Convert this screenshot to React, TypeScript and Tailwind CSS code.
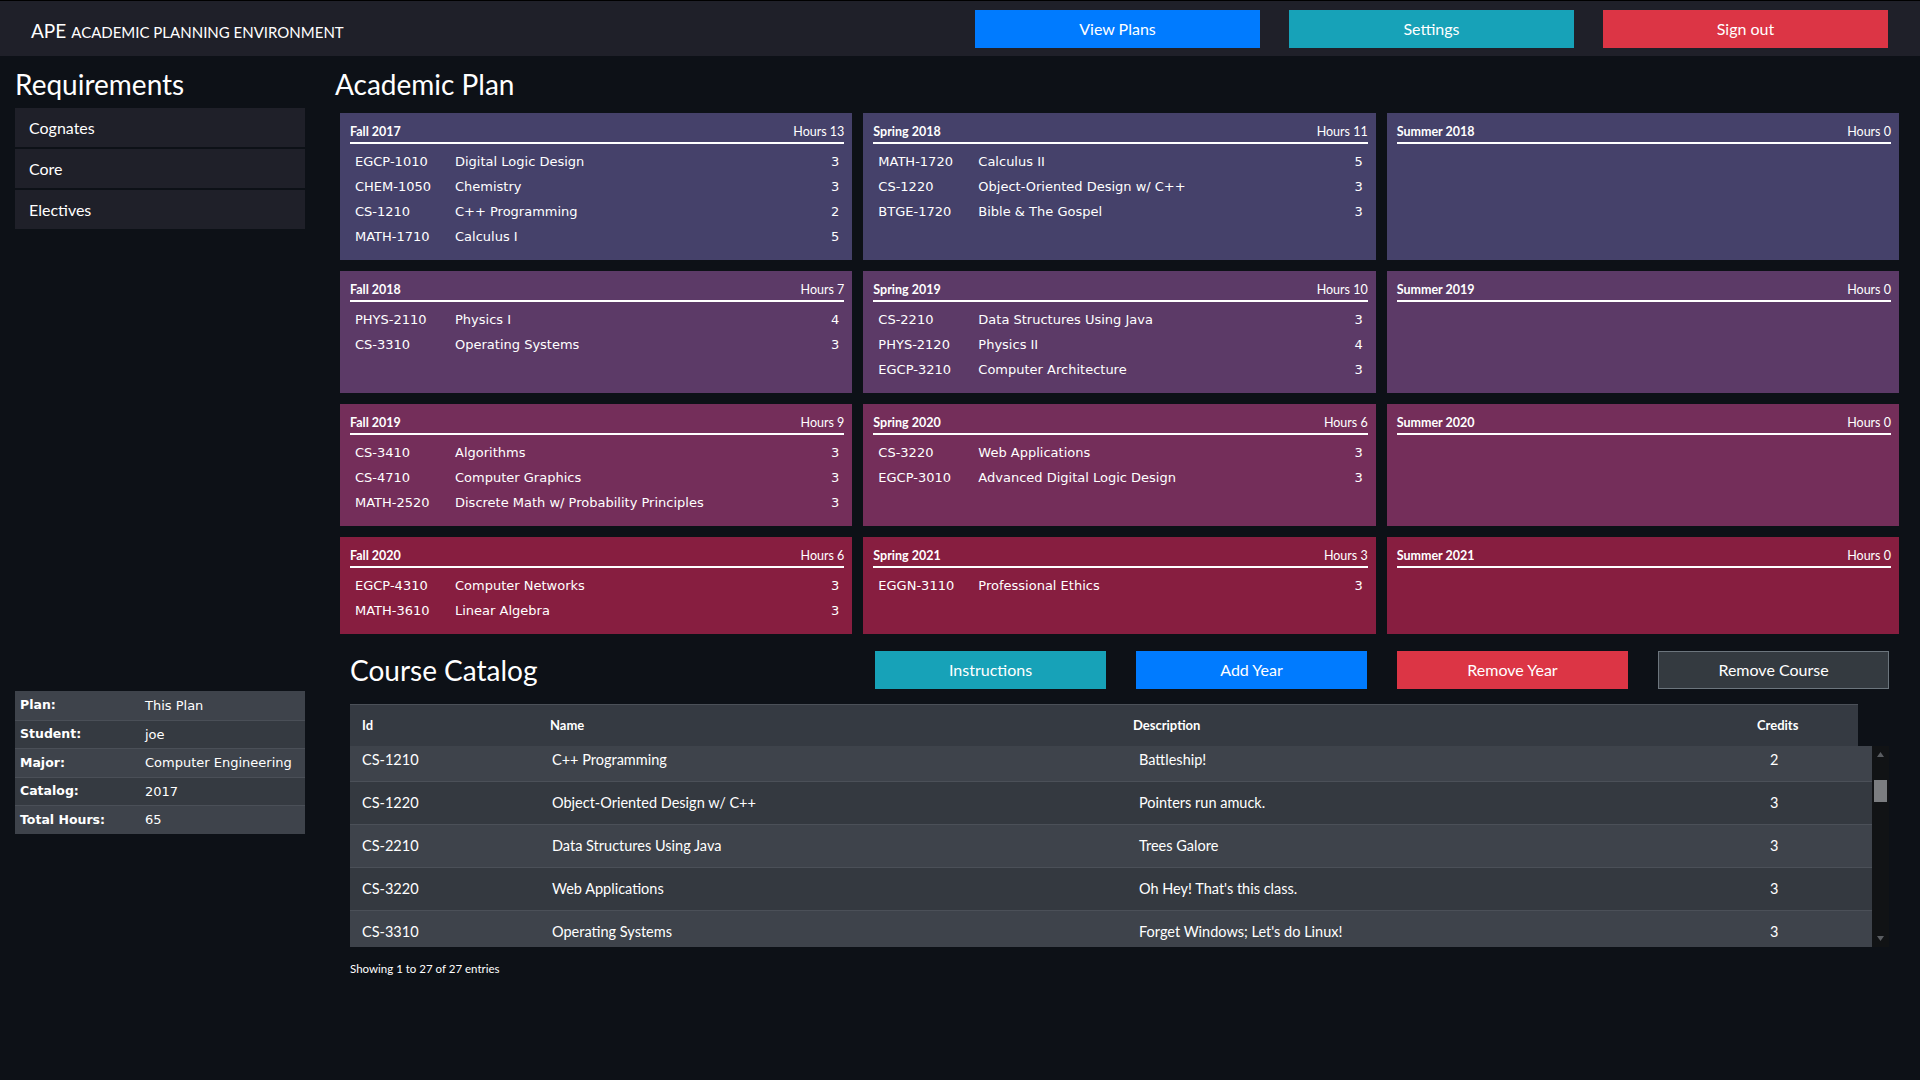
import React from "react";

const SEG = "font-['Lato','Open_Sans',sans-serif]";
const VER = "font-['DejaVu_Sans','Verdana',sans-serif]";

type Course = [string, string, number];
type Sem = { name: string; hours: number; courses: Course[] };

const rows: { bg: string; sems: Sem[] }[] = [
  {
    bg: "bg-[#45416a]",
    sems: [
      {
        name: "Fall 2017",
        hours: 13,
        courses: [
          ["EGCP-1010", "Digital Logic Design", 3],
          ["CHEM-1050", "Chemistry", 3],
          ["CS-1210", "C++ Programming", 2],
          ["MATH-1710", "Calculus I", 5],
        ],
      },
      {
        name: "Spring 2018",
        hours: 11,
        courses: [
          ["MATH-1720", "Calculus II", 5],
          ["CS-1220", "Object-Oriented Design w/ C++", 3],
          ["BTGE-1720", "Bible & The Gospel", 3],
        ],
      },
      { name: "Summer 2018", hours: 0, courses: [] },
    ],
  },
  {
    bg: "bg-[#5c3a67]",
    sems: [
      {
        name: "Fall 2018",
        hours: 7,
        courses: [
          ["PHYS-2110", "Physics I", 4],
          ["CS-3310", "Operating Systems", 3],
        ],
      },
      {
        name: "Spring 2019",
        hours: 10,
        courses: [
          ["CS-2210", "Data Structures Using Java", 3],
          ["PHYS-2120", "Physics II", 4],
          ["EGCP-3210", "Computer Architecture", 3],
        ],
      },
      { name: "Summer 2019", hours: 0, courses: [] },
    ],
  },
  {
    bg: "bg-[#742e5a]",
    sems: [
      {
        name: "Fall 2019",
        hours: 9,
        courses: [
          ["CS-3410", "Algorithms", 3],
          ["CS-4710", "Computer Graphics", 3],
          ["MATH-2520", "Discrete Math w/ Probability Principles", 3],
        ],
      },
      {
        name: "Spring 2020",
        hours: 6,
        courses: [
          ["CS-3220", "Web Applications", 3],
          ["EGCP-3010", "Advanced Digital Logic Design", 3],
        ],
      },
      { name: "Summer 2020", hours: 0, courses: [] },
    ],
  },
  {
    bg: "bg-[#871e40]",
    sems: [
      {
        name: "Fall 2020",
        hours: 6,
        courses: [
          ["EGCP-4310", "Computer Networks", 3],
          ["MATH-3610", "Linear Algebra", 3],
        ],
      },
      {
        name: "Spring 2021",
        hours: 3,
        courses: [["EGGN-3110", "Professional Ethics", 3]],
      },
      { name: "Summer 2021", hours: 0, courses: [] },
    ],
  },
];

const catalog: [string, string, string, number][] = [
  ["CS-1210", "C++ Programming", "Battleship!", 2],
  ["CS-1220", "Object-Oriented Design w/ C++", "Pointers run amuck.", 3],
  ["CS-2210", "Data Structures Using Java", "Trees Galore", 3],
  ["CS-3220", "Web Applications", "Oh Hey! That's this class.", 3],
  ["CS-3310", "Operating Systems", "Forget Windows; Let's do Linux!", 3],
];

const info: [string, string][] = [
  ["Plan:", "This Plan"],
  ["Student:", "joe"],
  ["Major:", "Computer Engineering"],
  ["Catalog:", "2017"],
  ["Total Hours:", "65"],
];

function Card({ sem, bg }: { sem: Sem; bg: string }) {
  return (
    <div className={`${bg} pt-[10px] pb-[11px] pl-[10px] pr-[8px] text-white`}>
      <div className={`${SEG} flex h-[21px] items-center justify-between border-b-2 border-white pb-[1px] text-[12.5px]`}>
        <span className="font-bold">{sem.name}</span>
        <span>Hours {sem.hours}</span>
      </div>
      <div className={`${VER} pt-[5px] px-[5px] text-[13px]`}>
        {sem.courses.map((c) => (
          <div key={c[0]} className="grid h-[25px] grid-cols-[100px_1fr_auto] items-center">
            <span>{c[0]}</span>
            <span>{c[1]}</span>
            <span>{c[2]}</span>
          </div>
        ))}
      </div>
    </div>
  );
}

export default function App() {
  return (
    <div className={`${SEG} h-[1080px] w-full overflow-hidden bg-[#0d1117] text-white`}>
      {/* Header */}
      <div className="flex h-[56px] items-center border-t border-black bg-[#1f2029] pl-[31px] pr-[32px]">
        <div className="flex flex-1 items-baseline pt-[5px]">
          <span className="text-[19px]">APE</span>
          <span className="ml-[5px] text-[15px]">ACADEMIC PLANNING ENVIRONMENT</span>
        </div>
        <div className="flex gap-[29px]">
          <button className="h-[38px] w-[285px] bg-[#007bff] text-[16px] text-white">View Plans</button>
          <button className="h-[38px] w-[285px] bg-[#17a2b8] text-[16px] text-white">Settings</button>
          <button className="h-[38px] w-[285px] bg-[#dc3545] text-[16px] text-white">Sign out</button>
        </div>
      </div>

      <div className="flex">
        {/* Sidebar */}
        <div className="flex w-[305px] shrink-0 flex-col pl-[15px] pt-[11px]">
          <h3 className="mb-[7px] text-[28px] leading-[34px]">Requirements</h3>
          <div className="flex flex-col gap-[2px]">
            {["Cognates", "Core", "Electives"].map((t) => (
              <div key={t} className="flex h-[39px] items-center bg-[#1f2029] pl-[14px] text-[16px]">
                {t}
              </div>
            ))}
          </div>
          <div className={`${VER} mt-[462px] text-[13px]`}>
            {info.map(([k, v], i) => (
              <div
                key={k}
                className={`grid h-[28.6px] grid-cols-[125px_1fr] items-center pl-[5px] ${
                  i > 0 ? "border-t border-[#4a4f57]" : ""
                } ${i % 2 === 0 ? "bg-[#3e434b]" : "bg-[#353a41]"}`}
              >
                <span className="text-[12.5px] font-bold">{k}</span>
                <span>{v}</span>
              </div>
            ))}
          </div>
        </div>

        {/* Main */}
        <div className="ml-[30px] flex flex-1 flex-col pt-[11px]">
          <h3 className="mb-[12px] text-[28px] leading-[34px]">Academic Plan</h3>
          <div className="ml-[5px] mr-[21px] grid grid-cols-3 gap-x-[11px] gap-y-[11px]">
            {rows.map((r) =>
              r.sems.map((s) => <Card key={s.name} sem={s} bg={r.bg} />)
            )}
          </div>

          <div className="ml-[15px] mr-[31px] mt-[17px]">
            <div className="flex h-[38px] items-center">
              <h3 className="flex-1 text-[28px] leading-[34px]">Course Catalog</h3>
              <div className="flex gap-[30px]">
                <button className="h-[38px] w-[231px] bg-[#17a2b8] text-[16px] text-white">Instructions</button>
                <button className="h-[38px] w-[231px] bg-[#007bff] text-[16px] text-white">Add Year</button>
                <button className="h-[38px] w-[231px] bg-[#dc3545] text-[16px] text-white">Remove Year</button>
                <button className="h-[38px] w-[231px] border border-[#6c757d] bg-[#343a40] text-[16px] text-white">
                  Remove Course
                </button>
              </div>
            </div>

            {/* Table */}
            <div className="mt-[15px]">
              <div className="mr-[31px] grid h-[42px] grid-cols-[188px_583px_624px_1fr] items-center border-t border-[#4b5058] bg-[#353a42] text-[13px] font-bold">
                <span className="pl-[12px]">Id</span>
                <span className="pl-[12px]">Name</span>
                <span className="pl-[12px]">Description</span>
                <span className="pl-[12px]">Credits</span>
              </div>
              <div className="flex h-[201px]">
                <div className="flex-1 overflow-hidden">
                  <div className="-mt-[8px]">
                    {catalog.map((c, i) => (
                      <div
                        key={c[0]}
                        className={`grid h-[43px] grid-cols-[190px_587px_618px_1fr] items-center border-t border-[#4b5058] text-[14.5px] ${
                          i % 2 === 0 ? "bg-[#3e434b]" : "bg-[#343940]"
                        }`}
                      >
                        <span className="pl-[12px]">{c[0]}</span>
                        <span className="pl-[12px]">{c[1]}</span>
                        <span className="pl-[12px]">{c[2]}</span>
                        <span className="pl-[25px]">{c[3]}</span>
                      </div>
                    ))}
                  </div>
                </div>
                <div className="flex w-[17px] flex-col items-center bg-[#111315]">
                  <div className="flex h-[17px] items-center justify-center">
                    <svg width="7" height="5" viewBox="0 0 7 5">
                      <path d="M0 5 L3.5 0 L7 5 Z" fill="#5a5d61" />
                    </svg>
                  </div>
                  <div className="mt-[17px] h-[22px] w-[13px] bg-[#7b7d80]" />
                  <div className="flex-1" />
                  <div className="flex h-[17px] items-center justify-center">
                    <svg width="7" height="5" viewBox="0 0 7 5">
                      <path d="M0 0 L3.5 5 L7 0 Z" fill="#5a5d61" />
                    </svg>
                  </div>
                </div>
              </div>
              <div className="mt-[13px] text-[11.5px]">Showing 1 to 27 of 27 entries</div>
            </div>
          </div>
        </div>
      </div>
    </div>
  );
}
